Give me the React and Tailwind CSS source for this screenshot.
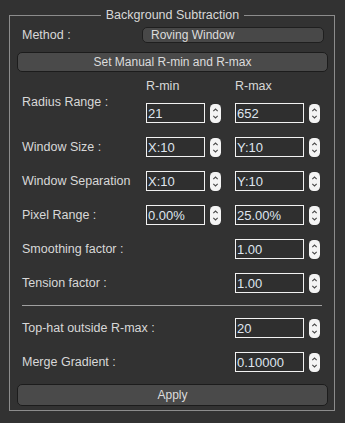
import React from 'react';

const font = { fontFamily: '"Liberation Sans", Arial, sans-serif' };

function Spinner() {
    return (
        <svg width="11" height="19" viewBox="0 0 11 19" className="mt-[1px] shrink-0">
            <rect x="0" y="0" width="11" height="19" rx="4.5" fill="#f4f4f4" />
            <path d="M3.3 7.2 L5.5 5 L7.7 7.2" fill="none" stroke="#4a4a4a" strokeWidth="1.1" />
            <path d="M3.3 11.8 L5.5 14 L7.7 11.8" fill="none" stroke="#4a4a4a" strokeWidth="1.1" />
        </svg>
    );
}

function Field({ value, wide }) {
    return (
        <div className="flex items-center gap-[5px]">
            <div className={`${wide ? 'w-[69px]' : 'w-[59px]'} h-[20px] border border-[#f2f2f2] bg-[#2f2f2f] flex items-center pl-[1px] text-[13px] text-[#dfe5ee] leading-none`}>
                {value}
            </div>
            <Spinner />
        </div>
    );
}

function PairRow({ label, a, b, className = 'mt-[14px]' }) {
    return (
        <div className={`flex items-center h-[20px] ${className}`}>
            <span className="w-[129px] pl-[5px]">{label}</span>
            <Field value={a} />
            <div className="w-[14px]" />
            <Field value={b} wide />
        </div>
    );
}

function SingleRow({ label, value, className = 'mt-[14px]' }) {
    return (
        <div className={`flex items-center h-[20px] ${className}`}>
            <span className="w-[218px] pl-[5px]">{label}</span>
            <Field value={value} wide />
        </div>
    );
}

export default function App() {
    return (
        <div className="w-[345px] h-[423px] bg-[#323232] text-[#d8d8d8] text-[12.5px] overflow-hidden" style={font}>
            <fieldset className="ml-[9px] mt-[7px] w-[326px] border border-[#8c8c8c] pl-[7px] pr-[6px] pb-[4px]">
                <legend align="center" className="mx-auto px-[5px] leading-[16px] text-[12.5px] text-[#d8d8d8]">
                    Background Subtraction
                </legend>

                <div className="mt-[4px] h-[16px] flex items-center">
                    <span className="w-[120px] ml-[5px]">Method :</span>
                    <button className="w-[182px] h-[16px] rounded-[5px] bg-[#484848] border border-[#1f1f1f] text-left pl-[8px] text-[12px] leading-none text-[#dcdcdc]">
                        Roving Window
                    </button>
                </div>

                <button className="mt-[9px] w-full h-[20px] rounded-[5px] bg-[#4a4a4a] border border-[#1c1c1c] text-[12px] leading-none text-[#dcdcdc]">
                    Set Manual R-min and R-max
                </button>

                <div className="flex mt-[6px]">
                    <span className="w-[129px] pl-[5px] self-center pt-[3px]">Radius Range :</span>
                    <div className="flex flex-col">
                        <div className="flex h-[16px] items-center">
                            <span className="w-[89px] pl-[0px]">R-min</span>
                            <span>R-max</span>
                        </div>
                        <div className="flex items-center h-[20px] mt-[9px]">
                            <Field value="21" />
                            <div className="w-[14px]" />
                            <Field value="652" wide />
                        </div>
                    </div>
                </div>

                <PairRow label="Window Size :" a="X:10" b="Y:10" />
                <PairRow label="Window Separation" a="X:10" b="Y:10" />
                <PairRow label="Pixel Range :" a="0.00%" b="25.00%" />
                <SingleRow label="Smoothing factor :" value="1.00" />
                <SingleRow label="Tension factor :" value="1.00" />

                <div className="mt-[12px] ml-[5px] w-[300px] h-px bg-[#a0a0a0]" />

                <SingleRow label="Top-hat outside R-max :" value="20" className="mt-[12px]" />
                <SingleRow label="Merge Gradient :" value="0.10000" />

                <button className="mt-[12px] w-full h-[22px] rounded-[5px] bg-[#4a4a4a] border border-[#1c1c1c] text-[12px] leading-none text-[#dcdcdc]">
                    Apply
                </button>
            </fieldset>
        </div>
    );
}
